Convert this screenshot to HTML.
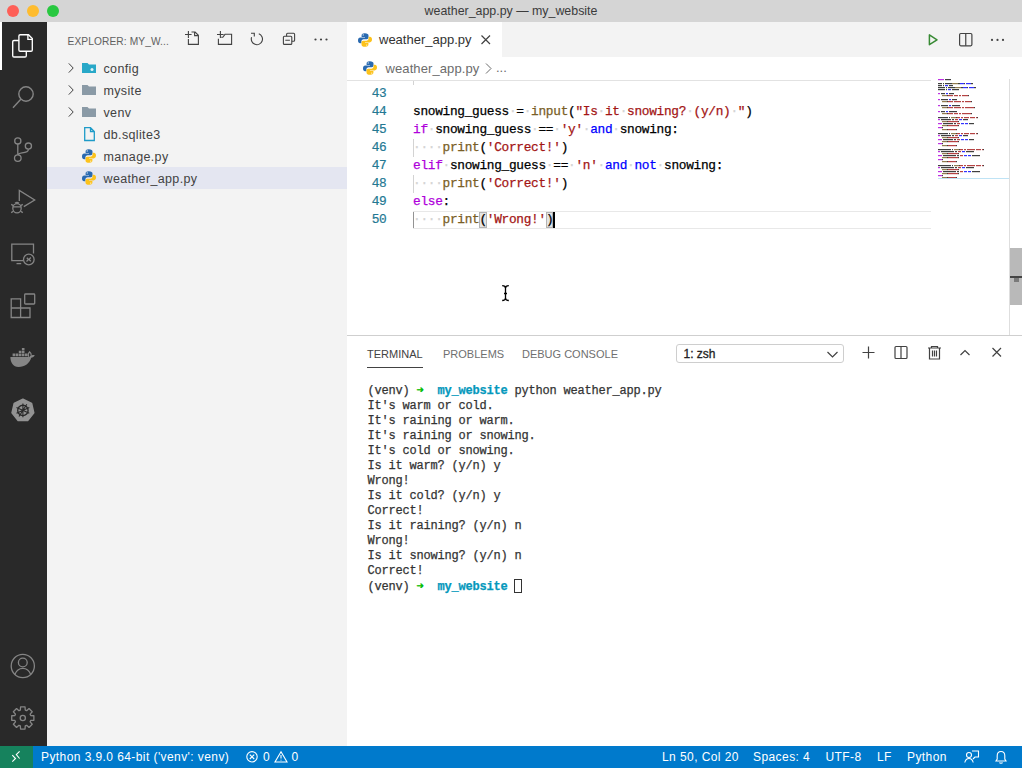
<!DOCTYPE html>
<html><head><meta charset="utf-8">
<style>
*{margin:0;padding:0;box-sizing:border-box}
html,body{width:1022px;height:768px;overflow:hidden;background:#fff;font-family:"Liberation Sans",sans-serif;-webkit-font-smoothing:antialiased}
.abs{position:absolute}
svg{position:absolute;overflow:visible}
#title{left:0;top:0;width:1022px;height:22px;background:#d5d5d5}
#title .t{position:absolute;left:0;width:1022px;top:4px;text-align:center;font-size:12.4px;color:#3b3b3b}
.tl{position:absolute;top:5px;width:12px;height:12px;border-radius:50%}
#act{left:0;top:22px;width:47px;height:724px;background:#292929}
#side{left:47px;top:22px;width:300px;height:724px;background:#f3f3f3}
#editor{left:347px;top:22px;width:675px;height:314px;background:#fff}
#panel{left:347px;top:336px;width:675px;height:410px;background:#fff}
#status{left:0;top:746px;width:1022px;height:22px;background:#007acc;color:#fff;font-size:12px}
.mono{font-family:"Liberation Mono",monospace}
.hdr{position:absolute;left:20.5px;top:14px;font-size:10.2px;color:#616161;letter-spacing:0.1px}
.row{position:absolute;left:0;width:300px;height:22px;font-size:12.5px;letter-spacing:0.35px;color:#424242}
.row .n{position:absolute;left:56.5px;top:4.6px}
.sel{background:#e4e6f1}
.ln{position:absolute;width:40px;text-align:right;color:#237893;-webkit-text-stroke:0.2px #237893}
.code{position:absolute;left:66px;white-space:pre;color:#000;font-size:12.8px;letter-spacing:-0.3px;-webkit-text-stroke:0.25px currentColor}
.kw{color:#af00db}.op{color:#0000ff}.fn{color:#795e26}.st{color:#a31515}
.ws{color:#d4d4d4}
.term{position:absolute;left:20.4px;top:48px;white-space:pre;font-size:12px;letter-spacing:-0.2px;line-height:15px;color:#333;-webkit-text-stroke:0.25px currentColor}
.cur{display:inline-block;width:7.4px;height:14px;border:1px solid #333;vertical-align:-3px}
.sb{position:absolute;top:4px;font-size:12px;letter-spacing:0.42px;color:#fff;white-space:pre}
</style></head><body>
<div id="title" class="abs">
  <div class="tl" style="left:7px;background:#fe5f57"></div>
  <div class="tl" style="left:27px;background:#febc2e"></div>
  <div class="tl" style="left:47px;background:#28c840"></div>
  <div class="t">weather_app.py — my_website</div>
</div>

<div id="act" class="abs">
  <div class="abs" style="left:0;top:0;width:1.5px;height:48px;background:#fff"></div>
  <!-- explorer -->
  <svg style="left:0;top:-22px" width="47" height="60" fill="none" stroke="#fff" stroke-width="1.35">
    <path d="M18.9 36 Q18.9 34.7 20.2 34.7 H28.5 L32.3 38.5 V49.9 Q32.3 51.2 31 51.2 H20.2 Q18.9 51.2 18.9 49.9 Z"/>
    <path d="M27.9 34.7 V39.4 H32.3"/>
    <path d="M18.9 40.5 H14 Q12.7 40.5 12.7 41.8 V55.7 Q12.7 57 14 57 H25 Q26.3 57 26.3 55.7 V51.2"/>
  </svg>
  <!-- search -->
  <svg style="left:0;top:-22px" width="47" height="120" fill="none" stroke="#858585" stroke-width="1.4">
    <circle cx="26" cy="94" r="7.2"/>
    <path d="M20.8 99.2 L13 107.8"/>
  </svg>
  <!-- scm -->
  <svg style="left:0;top:-22px" width="47" height="170" fill="none" stroke="#858585" stroke-width="1.3">
    <circle cx="17.8" cy="140.9" r="3.1"/>
    <circle cx="28.4" cy="146.1" r="3.1"/>
    <circle cx="17.8" cy="158.1" r="3.3"/>
    <path d="M17.8 144 V154.8 M28.4 149.2 C28.4 152 26 152.5 22 152.8 C20 153 18.5 153.8 17.8 154.8"/>
  </svg>
  <!-- debug -->
  <svg style="left:0;top:-22px" width="47" height="220" fill="none" stroke="#858585" stroke-width="1.3">
    <path d="M19.3 201 V190.4 L34.7 200 L23.8 206.6"/>
    <ellipse cx="17" cy="208.2" rx="4.2" ry="4.6"/>
    <path d="M12.8 206.8 H21.2 M11.2 204.4 L13.4 205.6 M22.8 204.4 L20.6 205.6 M11.2 212.6 L13.4 211.2 M22.8 212.6 L20.6 211.2 M15 203.2 Q17 201.8 19 203.2"/>
  </svg>
  <!-- remote -->
  <svg style="left:0;top:-22px" width="47" height="280" fill="none" stroke="#858585" stroke-width="1.3">
    <path d="M23 260.6 H11.8 V244.2 H33.5 V253.5"/>
    <path d="M16.5 263.6 H21.2"/>
    <circle cx="28.8" cy="259.5" r="5.3"/>
    <path d="M26.5 261.5 L28.5 259.5 L26.8 257.8 M30.8 257.5 L29 259.5 L30.8 261.3"/>
  </svg>
  <!-- extensions -->
  <svg style="left:0;top:-22px" width="47" height="330" fill="none" stroke="#858585" stroke-width="1.3">
    <path d="M11.2 298.8 H20.6 V317.5 H11.2 Z M11.2 308 H30 V317.5 H20.6"/>
    <rect x="24.7" y="294" width="10" height="10" rx="0.8"/>
  </svg>
  <!-- docker -->
  <svg style="left:0;top:-22px" width="47" height="380">
    <path fill="#858585" d="M10.4 357 H29.3 C30.2 355.3 32.4 354.4 34.8 355.3 C34 356.9 32.6 357.6 31.2 357.8 C29.6 363.2 25 367 18.5 367 C13.2 367 10.4 362.5 10.4 357 Z"/>
    <path fill="#858585" d="M12.6 353.6 H15.2 V356.3 H12.6 Z M15.7 353.6 H18.3 V356.3 H15.7 Z M18.8 353.6 H21.4 V356.3 H18.8 Z M21.9 353.6 H24.5 V356.3 H21.9 Z M25 353.6 H27.6 V356.3 H25 Z M18.8 350.7 H21.4 V353.1 H18.8 Z M21.9 350.7 H24.5 V353.1 H21.9 Z M21.9 347.9 H24.5 V350.2 H21.9 Z"/>
    <path fill="none" stroke="#858585" stroke-width="1.2" d="M28.6 356.8 C28 355 28.3 353 29.5 351.8 C30.8 352.8 31.4 354.2 31.2 355.6"/>
  </svg>
  <!-- k8s -->
  <svg style="left:0;top:-22px" width="47" height="430">
    <path fill="#939393" stroke="#939393" stroke-width="1.5" stroke-linejoin="round" d="M22.9 399.3 L31.6 403.5 L33.8 412.9 L27.7 420.5 L18.1 420.5 L12 412.9 L14.2 403.5 Z"/>
    <circle cx="22.9" cy="410.4" r="5.2" fill="none" stroke="#292929" stroke-width="1.4"/>
    <path d="M22.9 403.5 V417.3 M16.5 407.5 L29.3 413.3 M16.5 413.3 L29.3 407.5 M19 416.5 L26.8 404.3" stroke="#292929" stroke-width="1.1"/>
  </svg>
  <!-- account -->
  <svg style="left:0;top:-22px" width="47" height="700" fill="none" stroke="#858585" stroke-width="1.3">
    <circle cx="22.8" cy="666" r="11.6"/>
    <circle cx="22.8" cy="662.5" r="4.4"/>
    <path d="M14.8 674.5 C16.5 670 19.5 668.3 22.8 668.3 C26.1 668.3 29.1 670 30.8 674.5"/>
  </svg>
  <!-- settings -->
  <svg style="left:0;top:-22px" width="47" height="740" fill="none" stroke="#858585" stroke-width="1.3">
    <path stroke-linejoin="round" d="M20.35 710.07 L20.56 706.93 L25.04 706.93 L25.25 710.07 L26.67 710.66 L29.04 708.58 L32.22 711.76 L30.14 714.13 L30.73 715.55 L33.87 715.76 L33.87 720.24 L30.73 720.45 L30.14 721.87 L32.22 724.24 L29.04 727.42 L26.67 725.34 L25.25 725.93 L25.04 729.07 L20.56 729.07 L20.35 725.93 L18.93 725.34 L16.56 727.42 L13.38 724.24 L15.46 721.87 L14.87 720.45 L11.73 720.24 L11.73 715.76 L14.87 715.55 L15.46 714.13 L13.38 711.76 L16.56 708.58 L18.93 710.66 Z"/>
    <circle cx="22.8" cy="718" r="2.6"/>
  </svg>
</div>

<div id="side" class="abs">
  <div class="hdr">EXPLORER: MY_W...</div>
  <svg style="left:0;top:-22px" width="300" height="30" fill="none" stroke="#424242" stroke-width="1.1">
    <!-- new file -->
    <path d="M138 34.5 H144.6 M141.4 31 V37.9 M141.4 39 V44.4 H151.4 V35.3 L148.1 32 H144.5 M147.6 32 V35.6 H151.4"/>
    <!-- new folder -->
    <path d="M170 34.5 H176.6 M173.4 31 V37.9 M171.4 38.7 V44.4 H184.6 V34.3 H178 L175.8 37.3 H174.2"/>
    <!-- refresh -->
    <path d="M211.8 33.8 A5.6 5.6 0 1 1 204.6 37.2"/>
    <path d="M204 33.2 H207.3 V36.5"/>
    <!-- collapse -->
    <rect x="236.4" y="36.2" width="8.4" height="8.2" rx="1"/>
    <path d="M239.6 36.2 V34.2 Q239.6 33.2 240.6 33.2 H246.6 Q247.6 33.2 247.6 34.2 V40.2 Q247.6 41.2 246.6 41.2 H244.8 M238.3 40.3 H242.9"/>
  </svg>
  <svg style="left:0;top:-22px" width="300" height="50" fill="#424242">
    <circle cx="268.5" cy="39.5" r="1.1"/><circle cx="274" cy="39.5" r="1.1"/><circle cx="279.5" cy="39.5" r="1.1"/>
  </svg>

  <div class="row" style="top:35px">
    <svg style="left:20.5px;top:6px" width="8" height="12" fill="none" stroke="#424242" stroke-width="1"><path d="M0.8 0.4 L5.2 5 L0.8 9.6"/></svg>
    <svg style="left:35px;top:5px" width="16" height="12"><path fill="#28a8c8" d="M0 1 H5.5 L7 2.5 H14 V11 H0 Z"/><circle cx="10" cy="7.5" r="1.5" fill="#e0f4f8"/></svg>
    <div class="n">config</div>
  </div>
  <div class="row" style="top:57px">
    <svg style="left:20.5px;top:6px" width="8" height="12" fill="none" stroke="#424242" stroke-width="1"><path d="M0.8 0.4 L5.2 5 L0.8 9.6"/></svg>
    <svg style="left:35px;top:5px" width="16" height="12"><path fill="#8a9aa6" d="M0 1 H5.5 L7 2.5 H14 V11 H0 Z"/></svg>
    <div class="n">mysite</div>
  </div>
  <div class="row" style="top:79px">
    <svg style="left:20.5px;top:6px" width="8" height="12" fill="none" stroke="#424242" stroke-width="1"><path d="M0.8 0.4 L5.2 5 L0.8 9.6"/></svg>
    <svg style="left:35px;top:5px" width="16" height="12"><path fill="#8a9aa6" d="M0 1 H5.5 L7 2.5 H14 V11 H0 Z"/></svg>
    <div class="n">venv</div>
  </div>
  <div class="row" style="top:101px">
    <svg style="left:37px;top:4px" width="12" height="15" fill="none" stroke="#1e9bc8" stroke-width="1.3"><path d="M0.7 0.7 H6.5 L10.3 4.5 V13.5 H0.7 Z M6.5 0.7 V4.5 H10.3"/></svg>
    <div class="n">db.sqlite3</div>
  </div>
  <div class="row" style="top:123px">
    <svg class="py" style="left:35px;top:4px" width="14" height="14"><use href="#pyi"/></svg>
    <div class="n">manage.py</div>
  </div>
  <div class="row sel" style="top:145px">
    <svg class="py" style="left:35px;top:4px" width="14" height="14"><use href="#pyi"/></svg>
    <div class="n">weather_app.py</div>
  </div>
</div>

<svg width="0" height="0" style="position:absolute">
  <defs>
    <g id="pyi">
      <path fill="#2a6ab0" d="M6.8 0.3 C4 0.3 3.6 1.4 3.6 2.6 V4 H7 V4.6 H2.2 C1 4.6 0 5.6 0 7.4 C0 9.2 0.9 10.2 2.1 10.2 H3.4 V8.5 C3.4 7.3 4.4 6.3 5.6 6.3 H8.8 C9.8 6.3 10.5 5.5 10.5 4.6 V2.6 C10.5 1.2 9.3 0.3 6.8 0.3 Z"/>
      <circle cx="5.2" cy="1.9" r="0.6" fill="#fff"/>
      <path fill="#fcc21b" d="M7.2 13.7 C10 13.7 10.4 12.6 10.4 11.4 V10 H7 V9.4 H11.8 C13 9.4 14 8.4 14 6.6 C14 4.8 13.1 3.8 11.9 3.8 H10.6 V5.5 C10.6 6.7 9.6 7.7 8.4 7.7 H5.2 C4.2 7.7 3.5 8.5 3.5 9.4 V11.4 C3.5 12.8 4.7 13.7 7.2 13.7 Z"/>
      <circle cx="8.8" cy="12.1" r="0.6" fill="#fff"/>
    </g>
  </defs>
</svg>

<div id="editor" class="abs">
  <div class="abs" style="left:0;top:0;width:675px;height:35px;background:#f3f3f3"></div>
  <div class="abs" style="left:0;top:0;width:155px;height:35px;background:#fff">
    <svg style="left:11px;top:11px" width="14" height="14"><use href="#pyi"/></svg>
    <div class="abs" style="left:32px;top:10px;font-size:13px;color:#333">weather_app.py</div>
    <svg style="left:134px;top:13px" width="10" height="10" fill="none" stroke="#424242" stroke-width="1.2"><path d="M0.5 0.5 L9 9 M9 0.5 L0.5 9"/></svg>
  </div>
  <svg style="left:0;top:0" width="675" height="40">
    <path d="M582.4 12.9 V22.7 L590 17.8 Z" fill="none" stroke="#388a34" stroke-width="1.5" stroke-linejoin="round"/>
    <rect x="612.6" y="11.5" width="12.3" height="12.3" rx="1.2" fill="none" stroke="#424242" stroke-width="1.2"/>
    <path d="M618.75 11.5 V23.8" stroke="#424242" stroke-width="1.2"/>
    <circle cx="645" cy="17.9" r="1.1" fill="#424242"/><circle cx="650.5" cy="17.9" r="1.1" fill="#424242"/><circle cx="656" cy="17.9" r="1.1" fill="#424242"/>
  </svg>
  <!-- breadcrumbs -->
  <div class="abs" style="left:0;top:35px;width:675px;height:23px;background:#fff">
    <svg style="left:16px;top:3.5px" width="14" height="14"><use href="#pyi"/></svg>
    <div class="abs" style="left:38.5px;top:4px;font-size:13px;color:#6c6c6c;letter-spacing:0.1px">weather_app.py</div>
    <svg style="left:138px;top:6px" width="8" height="12" fill="none" stroke="#6c6c6c" stroke-width="1"><path d="M1 0.5 L6 5.5 L1 10.5"/></svg>
    <div class="abs" style="left:149px;top:3px;font-size:13px;color:#6c6c6c">...</div>
  </div>
  <!-- code -->
  <div id="code" class="abs mono" style="left:0;top:58px;width:675px;height:256px;overflow:hidden">
<div class="ln" style="left:0;top:-13px;height:18px;line-height:18px;font-size:12.8px;letter-spacing:-0.3px;width:39.5px">42</div>
<div class="abs" style="left:66px;top:-13px;width:1px;height:18px;background:#d3d3d3"></div><div class="abs" style="left:66px;top:59px;width:1px;height:18px;background:#d3d3d3"></div><div class="abs" style="left:66px;top:95px;width:1px;height:18px;background:#d3d3d3"></div><div class="abs" style="left:66px;top:131px;width:1px;height:18px;background:#939393"></div><div class="abs" style="left:132.4px;top:131.5px;width:7.4px;height:16.5px;background:#e4e4e4;border:1px solid #b4b4b4"></div><div class="abs" style="left:198.8px;top:131.5px;width:7.4px;height:16.5px;background:#e4e4e4;border:1px solid #b4b4b4"></div><div class="abs" style="left:206px;top:131px;width:2px;height:18px;background:#000"></div>
<div class="code" style="top:-15px;height:18px;line-height:18px"><span class="ws">····</span><span class="fn">print</span>(<span class="st">&#x27;Wrong!&#x27;</span>)</div>
<div class="ln" style="left:0;top:5px;height:18px;line-height:18px;font-size:12.8px;letter-spacing:-0.3px;width:39.5px">43</div>
<div class="code" style="top:5px;height:18px;line-height:18px"></div>
<div class="ln" style="left:0;top:23px;height:18px;line-height:18px;font-size:12.8px;letter-spacing:-0.3px;width:39.5px">44</div>
<div class="code" style="top:23px;height:18px;line-height:18px">snowing_guess<span class="ws">·</span>=<span class="ws">·</span><span class="fn">input</span>(<span class="st">&quot;Is</span><span class="ws">·</span><span class="st">it</span><span class="ws">·</span><span class="st">snowing?</span><span class="ws">·</span><span class="st">(y/n)</span><span class="ws">·</span><span class="st">&quot;</span>)</div>
<div class="ln" style="left:0;top:41px;height:18px;line-height:18px;font-size:12.8px;letter-spacing:-0.3px;width:39.5px">45</div>
<div class="code" style="top:41px;height:18px;line-height:18px"><span class="kw">if</span><span class="ws">·</span>snowing_guess<span class="ws">·</span>==<span class="ws">·</span><span class="st">&#x27;y&#x27;</span><span class="ws">·</span><span class="op">and</span><span class="ws">·</span>snowing:</div>
<div class="ln" style="left:0;top:59px;height:18px;line-height:18px;font-size:12.8px;letter-spacing:-0.3px;width:39.5px">46</div>
<div class="code" style="top:59px;height:18px;line-height:18px"><span class="ws">····</span><span class="fn">print</span>(<span class="st">&#x27;Correct!&#x27;</span>)</div>
<div class="ln" style="left:0;top:77px;height:18px;line-height:18px;font-size:12.8px;letter-spacing:-0.3px;width:39.5px">47</div>
<div class="code" style="top:77px;height:18px;line-height:18px"><span class="kw">elif</span><span class="ws">·</span>snowing_guess<span class="ws">·</span>==<span class="ws">·</span><span class="st">&#x27;n&#x27;</span><span class="ws">·</span><span class="op">and</span><span class="ws">·</span><span class="op">not</span><span class="ws">·</span>snowing:</div>
<div class="ln" style="left:0;top:95px;height:18px;line-height:18px;font-size:12.8px;letter-spacing:-0.3px;width:39.5px">48</div>
<div class="code" style="top:95px;height:18px;line-height:18px"><span class="ws">····</span><span class="fn">print</span>(<span class="st">&#x27;Correct!&#x27;</span>)</div>
<div class="ln" style="left:0;top:113px;height:18px;line-height:18px;font-size:12.8px;letter-spacing:-0.3px;width:39.5px">49</div>
<div class="code" style="top:113px;height:18px;line-height:18px"><span class="kw">else</span>:</div>
<div class="ln" style="left:0;top:131px;height:18px;line-height:18px;font-size:12.8px;letter-spacing:-0.3px;width:39.5px">50</div>
<div class="code" style="top:131px;height:18px;line-height:18px"><span class="ws">····</span><span class="fn">print</span><span class="br">(</span><span class="st">&#x27;Wrong!&#x27;</span><span class="br2">)</span></div>
  </div>
<div id="minimap" class="abs" style="left:-347px;top:-22px;width:1022px;height:340px;pointer-events:none">
<svg style="left:0;top:0" width="1022" height="340" opacity="0.8"><rect x="938" y="79" width="6" height="1.2" fill="#af00db"/><rect x="945" y="79" width="6" height="1.2" fill="#111"/><rect x="938" y="83" width="4" height="1.2" fill="#111"/><rect x="943" y="83" width="1" height="1.2" fill="#111"/><rect x="945" y="83" width="6" height="1.2" fill="#111"/><rect x="951" y="83" width="1" height="1.2" fill="#111"/><rect x="952" y="83" width="6" height="1.2" fill="#795e26"/><rect x="958" y="83" width="1" height="1.2" fill="#111"/><rect x="959" y="83" width="1" height="1.2" fill="#111"/><rect x="960" y="83" width="4" height="1.2" fill="#0000ff"/><rect x="964" y="83" width="1" height="1.2" fill="#111"/><rect x="966" y="83" width="5" height="1.2" fill="#0000ff"/><rect x="971" y="83" width="1" height="1.2" fill="#111"/><rect x="972" y="83" width="1" height="1.2" fill="#111"/><rect x="938" y="85" width="4" height="1.2" fill="#111"/><rect x="943" y="85" width="1" height="1.2" fill="#111"/><rect x="945" y="85" width="3" height="1.2" fill="#0000ff"/><rect x="949" y="85" width="4" height="1.2" fill="#111"/><rect x="938" y="87" width="7" height="1.2" fill="#111"/><rect x="946" y="87" width="1" height="1.2" fill="#111"/><rect x="948" y="87" width="6" height="1.2" fill="#111"/><rect x="954" y="87" width="1" height="1.2" fill="#111"/><rect x="955" y="87" width="6" height="1.2" fill="#795e26"/><rect x="961" y="87" width="1" height="1.2" fill="#111"/><rect x="962" y="87" width="1" height="1.2" fill="#111"/><rect x="963" y="87" width="4" height="1.2" fill="#0000ff"/><rect x="967" y="87" width="1" height="1.2" fill="#111"/><rect x="969" y="87" width="5" height="1.2" fill="#0000ff"/><rect x="974" y="87" width="1" height="1.2" fill="#111"/><rect x="975" y="87" width="1" height="1.2" fill="#111"/><rect x="938" y="89" width="7" height="1.2" fill="#111"/><rect x="946" y="89" width="1" height="1.2" fill="#111"/><rect x="948" y="89" width="3" height="1.2" fill="#0000ff"/><rect x="952" y="89" width="7" height="1.2" fill="#111"/><rect x="938" y="93" width="2" height="1.2" fill="#af00db"/><rect x="941" y="93" width="4" height="1.2" fill="#111"/><rect x="946" y="93" width="2" height="1.2" fill="#0000ff"/><rect x="949" y="93" width="4" height="1.2" fill="#111"/><rect x="953" y="93" width="1" height="1.2" fill="#111"/><rect x="942" y="95" width="5" height="1.2" fill="#795e26"/><rect x="947" y="95" width="1" height="1.2" fill="#111"/><rect x="948" y="95" width="5" height="1.2" fill="#a31515"/><rect x="954" y="95" width="4" height="1.2" fill="#a31515"/><rect x="959" y="95" width="2" height="1.2" fill="#a31515"/><rect x="962" y="95" width="6" height="1.2" fill="#a31515"/><rect x="968" y="95" width="1" height="1.2" fill="#111"/><rect x="938" y="99" width="2" height="1.2" fill="#af00db"/><rect x="941" y="99" width="7" height="1.2" fill="#111"/><rect x="949" y="99" width="2" height="1.2" fill="#0000ff"/><rect x="952" y="99" width="4" height="1.2" fill="#111"/><rect x="956" y="99" width="1" height="1.2" fill="#111"/><rect x="942" y="101" width="5" height="1.2" fill="#795e26"/><rect x="947" y="101" width="1" height="1.2" fill="#111"/><rect x="948" y="101" width="5" height="1.2" fill="#a31515"/><rect x="954" y="101" width="7" height="1.2" fill="#a31515"/><rect x="962" y="101" width="2" height="1.2" fill="#a31515"/><rect x="965" y="101" width="6" height="1.2" fill="#a31515"/><rect x="971" y="101" width="1" height="1.2" fill="#111"/><rect x="938" y="105" width="2" height="1.2" fill="#af00db"/><rect x="941" y="105" width="7" height="1.2" fill="#111"/><rect x="949" y="105" width="2" height="1.2" fill="#0000ff"/><rect x="952" y="105" width="7" height="1.2" fill="#111"/><rect x="959" y="105" width="1" height="1.2" fill="#111"/><rect x="942" y="107" width="5" height="1.2" fill="#795e26"/><rect x="947" y="107" width="1" height="1.2" fill="#111"/><rect x="948" y="107" width="5" height="1.2" fill="#a31515"/><rect x="954" y="107" width="7" height="1.2" fill="#a31515"/><rect x="962" y="107" width="2" height="1.2" fill="#a31515"/><rect x="965" y="107" width="9" height="1.2" fill="#a31515"/><rect x="974" y="107" width="1" height="1.2" fill="#111"/><rect x="938" y="111" width="2" height="1.2" fill="#af00db"/><rect x="941" y="111" width="4" height="1.2" fill="#111"/><rect x="946" y="111" width="2" height="1.2" fill="#0000ff"/><rect x="949" y="111" width="7" height="1.2" fill="#111"/><rect x="956" y="111" width="1" height="1.2" fill="#111"/><rect x="942" y="113" width="5" height="1.2" fill="#795e26"/><rect x="947" y="113" width="1" height="1.2" fill="#111"/><rect x="948" y="113" width="5" height="1.2" fill="#a31515"/><rect x="954" y="113" width="4" height="1.2" fill="#a31515"/><rect x="959" y="113" width="2" height="1.2" fill="#a31515"/><rect x="962" y="113" width="9" height="1.2" fill="#a31515"/><rect x="971" y="113" width="1" height="1.2" fill="#111"/><rect x="938" y="117" width="10" height="1.2" fill="#111"/><rect x="949" y="117" width="1" height="1.2" fill="#111"/><rect x="951" y="117" width="5" height="1.2" fill="#795e26"/><rect x="956" y="117" width="1" height="1.2" fill="#111"/><rect x="957" y="117" width="3" height="1.2" fill="#a31515"/><rect x="961" y="117" width="2" height="1.2" fill="#a31515"/><rect x="964" y="117" width="5" height="1.2" fill="#a31515"/><rect x="970" y="117" width="5" height="1.2" fill="#a31515"/><rect x="976" y="117" width="1" height="1.2" fill="#a31515"/><rect x="977" y="117" width="1" height="1.2" fill="#111"/><rect x="938" y="119" width="2" height="1.2" fill="#af00db"/><rect x="941" y="119" width="10" height="1.2" fill="#111"/><rect x="952" y="119" width="1" height="1.2" fill="#111"/><rect x="953" y="119" width="1" height="1.2" fill="#111"/><rect x="955" y="119" width="3" height="1.2" fill="#a31515"/><rect x="959" y="119" width="3" height="1.2" fill="#0000ff"/><rect x="963" y="119" width="4" height="1.2" fill="#111"/><rect x="967" y="119" width="1" height="1.2" fill="#111"/><rect x="942" y="121" width="5" height="1.2" fill="#795e26"/><rect x="947" y="121" width="1" height="1.2" fill="#111"/><rect x="948" y="121" width="10" height="1.2" fill="#a31515"/><rect x="958" y="121" width="1" height="1.2" fill="#111"/><rect x="938" y="123" width="4" height="1.2" fill="#af00db"/><rect x="943" y="123" width="10" height="1.2" fill="#111"/><rect x="954" y="123" width="1" height="1.2" fill="#111"/><rect x="955" y="123" width="1" height="1.2" fill="#111"/><rect x="957" y="123" width="3" height="1.2" fill="#a31515"/><rect x="961" y="123" width="3" height="1.2" fill="#0000ff"/><rect x="965" y="123" width="3" height="1.2" fill="#0000ff"/><rect x="969" y="123" width="4" height="1.2" fill="#111"/><rect x="973" y="123" width="1" height="1.2" fill="#111"/><rect x="942" y="125" width="5" height="1.2" fill="#795e26"/><rect x="947" y="125" width="1" height="1.2" fill="#111"/><rect x="948" y="125" width="10" height="1.2" fill="#a31515"/><rect x="958" y="125" width="1" height="1.2" fill="#111"/><rect x="938" y="127" width="4" height="1.2" fill="#af00db"/><rect x="942" y="127" width="1" height="1.2" fill="#111"/><rect x="942" y="129" width="5" height="1.2" fill="#795e26"/><rect x="947" y="129" width="1" height="1.2" fill="#111"/><rect x="948" y="129" width="8" height="1.2" fill="#a31515"/><rect x="956" y="129" width="1" height="1.2" fill="#111"/><rect x="938" y="133" width="10" height="1.2" fill="#111"/><rect x="949" y="133" width="1" height="1.2" fill="#111"/><rect x="951" y="133" width="5" height="1.2" fill="#795e26"/><rect x="956" y="133" width="1" height="1.2" fill="#111"/><rect x="957" y="133" width="3" height="1.2" fill="#a31515"/><rect x="961" y="133" width="2" height="1.2" fill="#a31515"/><rect x="964" y="133" width="5" height="1.2" fill="#a31515"/><rect x="970" y="133" width="5" height="1.2" fill="#a31515"/><rect x="976" y="133" width="1" height="1.2" fill="#a31515"/><rect x="977" y="133" width="1" height="1.2" fill="#111"/><rect x="938" y="135" width="2" height="1.2" fill="#af00db"/><rect x="941" y="135" width="10" height="1.2" fill="#111"/><rect x="952" y="135" width="1" height="1.2" fill="#111"/><rect x="953" y="135" width="1" height="1.2" fill="#111"/><rect x="955" y="135" width="3" height="1.2" fill="#a31515"/><rect x="959" y="135" width="3" height="1.2" fill="#0000ff"/><rect x="963" y="135" width="4" height="1.2" fill="#111"/><rect x="967" y="135" width="1" height="1.2" fill="#111"/><rect x="942" y="137" width="5" height="1.2" fill="#795e26"/><rect x="947" y="137" width="1" height="1.2" fill="#111"/><rect x="948" y="137" width="10" height="1.2" fill="#a31515"/><rect x="958" y="137" width="1" height="1.2" fill="#111"/><rect x="938" y="139" width="4" height="1.2" fill="#af00db"/><rect x="943" y="139" width="10" height="1.2" fill="#111"/><rect x="954" y="139" width="1" height="1.2" fill="#111"/><rect x="955" y="139" width="1" height="1.2" fill="#111"/><rect x="957" y="139" width="3" height="1.2" fill="#a31515"/><rect x="961" y="139" width="3" height="1.2" fill="#0000ff"/><rect x="965" y="139" width="3" height="1.2" fill="#0000ff"/><rect x="969" y="139" width="4" height="1.2" fill="#111"/><rect x="973" y="139" width="1" height="1.2" fill="#111"/><rect x="942" y="141" width="5" height="1.2" fill="#795e26"/><rect x="947" y="141" width="1" height="1.2" fill="#111"/><rect x="948" y="141" width="10" height="1.2" fill="#a31515"/><rect x="958" y="141" width="1" height="1.2" fill="#111"/><rect x="938" y="143" width="4" height="1.2" fill="#af00db"/><rect x="942" y="143" width="1" height="1.2" fill="#111"/><rect x="942" y="145" width="5" height="1.2" fill="#795e26"/><rect x="947" y="145" width="1" height="1.2" fill="#111"/><rect x="948" y="145" width="8" height="1.2" fill="#a31515"/><rect x="956" y="145" width="1" height="1.2" fill="#111"/><rect x="938" y="149" width="13" height="1.2" fill="#111"/><rect x="952" y="149" width="1" height="1.2" fill="#111"/><rect x="954" y="149" width="5" height="1.2" fill="#795e26"/><rect x="959" y="149" width="1" height="1.2" fill="#111"/><rect x="960" y="149" width="3" height="1.2" fill="#a31515"/><rect x="964" y="149" width="2" height="1.2" fill="#a31515"/><rect x="967" y="149" width="8" height="1.2" fill="#a31515"/><rect x="976" y="149" width="5" height="1.2" fill="#a31515"/><rect x="982" y="149" width="1" height="1.2" fill="#a31515"/><rect x="983" y="149" width="1" height="1.2" fill="#111"/><rect x="938" y="151" width="2" height="1.2" fill="#af00db"/><rect x="941" y="151" width="13" height="1.2" fill="#111"/><rect x="955" y="151" width="1" height="1.2" fill="#111"/><rect x="956" y="151" width="1" height="1.2" fill="#111"/><rect x="958" y="151" width="3" height="1.2" fill="#a31515"/><rect x="962" y="151" width="3" height="1.2" fill="#0000ff"/><rect x="966" y="151" width="7" height="1.2" fill="#111"/><rect x="973" y="151" width="1" height="1.2" fill="#111"/><rect x="942" y="153" width="5" height="1.2" fill="#795e26"/><rect x="947" y="153" width="1" height="1.2" fill="#111"/><rect x="948" y="153" width="10" height="1.2" fill="#a31515"/><rect x="958" y="153" width="1" height="1.2" fill="#111"/><rect x="938" y="155" width="4" height="1.2" fill="#af00db"/><rect x="943" y="155" width="13" height="1.2" fill="#111"/><rect x="957" y="155" width="1" height="1.2" fill="#111"/><rect x="958" y="155" width="1" height="1.2" fill="#111"/><rect x="960" y="155" width="3" height="1.2" fill="#a31515"/><rect x="964" y="155" width="3" height="1.2" fill="#0000ff"/><rect x="968" y="155" width="3" height="1.2" fill="#0000ff"/><rect x="972" y="155" width="7" height="1.2" fill="#111"/><rect x="979" y="155" width="1" height="1.2" fill="#111"/><rect x="942" y="157" width="5" height="1.2" fill="#795e26"/><rect x="947" y="157" width="1" height="1.2" fill="#111"/><rect x="948" y="157" width="10" height="1.2" fill="#a31515"/><rect x="958" y="157" width="1" height="1.2" fill="#111"/><rect x="938" y="159" width="4" height="1.2" fill="#af00db"/><rect x="942" y="159" width="1" height="1.2" fill="#111"/><rect x="942" y="161" width="5" height="1.2" fill="#795e26"/><rect x="947" y="161" width="1" height="1.2" fill="#111"/><rect x="948" y="161" width="8" height="1.2" fill="#a31515"/><rect x="956" y="161" width="1" height="1.2" fill="#111"/><rect x="938" y="165" width="13" height="1.2" fill="#111"/><rect x="952" y="165" width="1" height="1.2" fill="#111"/><rect x="954" y="165" width="5" height="1.2" fill="#795e26"/><rect x="959" y="165" width="1" height="1.2" fill="#111"/><rect x="960" y="165" width="3" height="1.2" fill="#a31515"/><rect x="964" y="165" width="2" height="1.2" fill="#a31515"/><rect x="967" y="165" width="8" height="1.2" fill="#a31515"/><rect x="976" y="165" width="5" height="1.2" fill="#a31515"/><rect x="982" y="165" width="1" height="1.2" fill="#a31515"/><rect x="983" y="165" width="1" height="1.2" fill="#111"/><rect x="938" y="167" width="2" height="1.2" fill="#af00db"/><rect x="941" y="167" width="13" height="1.2" fill="#111"/><rect x="955" y="167" width="1" height="1.2" fill="#111"/><rect x="956" y="167" width="1" height="1.2" fill="#111"/><rect x="958" y="167" width="3" height="1.2" fill="#a31515"/><rect x="962" y="167" width="3" height="1.2" fill="#0000ff"/><rect x="966" y="167" width="7" height="1.2" fill="#111"/><rect x="973" y="167" width="1" height="1.2" fill="#111"/><rect x="942" y="169" width="5" height="1.2" fill="#795e26"/><rect x="947" y="169" width="1" height="1.2" fill="#111"/><rect x="948" y="169" width="10" height="1.2" fill="#a31515"/><rect x="958" y="169" width="1" height="1.2" fill="#111"/><rect x="938" y="171" width="4" height="1.2" fill="#af00db"/><rect x="943" y="171" width="13" height="1.2" fill="#111"/><rect x="957" y="171" width="1" height="1.2" fill="#111"/><rect x="958" y="171" width="1" height="1.2" fill="#111"/><rect x="960" y="171" width="3" height="1.2" fill="#a31515"/><rect x="964" y="171" width="3" height="1.2" fill="#0000ff"/><rect x="968" y="171" width="3" height="1.2" fill="#0000ff"/><rect x="972" y="171" width="7" height="1.2" fill="#111"/><rect x="979" y="171" width="1" height="1.2" fill="#111"/><rect x="942" y="173" width="5" height="1.2" fill="#795e26"/><rect x="947" y="173" width="1" height="1.2" fill="#111"/><rect x="948" y="173" width="10" height="1.2" fill="#a31515"/><rect x="958" y="173" width="1" height="1.2" fill="#111"/><rect x="938" y="175" width="4" height="1.2" fill="#af00db"/><rect x="942" y="175" width="1" height="1.2" fill="#111"/><rect x="942" y="177" width="5" height="1.2" fill="#795e26"/><rect x="947" y="177" width="1" height="1.2" fill="#111"/><rect x="948" y="177" width="8" height="1.2" fill="#a31515"/><rect x="956" y="177" width="1" height="1.2" fill="#111"/></svg>
<div class="abs" style="left:938px;top:177.5px;width:71px;height:1.5px;background:#bfe3f5"></div>
<div class="abs" style="left:1009px;top:79px;width:1px;height:257px;background:#dedede"></div>
<div class="abs" style="left:1009.5px;top:248px;width:12.5px;height:57px;background:#b9b9b9"></div><div class="abs" style="left:1014px;top:278px;width:5px;height:4px;background:#7a7a7a"></div>
<div class="abs" style="left:1010px;top:276px;width:12px;height:2px;background:#444"></div>
<div class="abs" style="left:347px;top:80px;width:584px;height:1px;background:#e2e2e2"></div>
<div class="abs" style="left:413px;top:211px;width:518px;height:17.5px;border-top:1.5px solid #e8e8e8;border-bottom:1.5px solid #e8e8e8"></div>
</div>
</div>

<div id="panel" class="abs">
  <div class="abs" style="left:0;top:-1px;width:675px;height:1px;background:#cfcfcf"></div>
  <div class="abs" style="left:20px;top:12px;font-size:11px;color:#424242">TERMINAL</div>
  <div class="abs" style="left:20px;top:31px;width:56px;height:1px;background:#424242"></div>
  <div class="abs" style="left:96px;top:12px;font-size:11px;color:#6f6f6f">PROBLEMS</div>
  <div class="abs" style="left:175px;top:12px;font-size:11px;color:#6f6f6f">DEBUG CONSOLE</div>
  <div class="abs" style="left:329px;top:8px;width:168px;height:19px;border:1px solid #cecece;border-radius:3px;background:#fff">
    <div class="abs" style="left:6.5px;top:2px;font-size:12px;color:#222;-webkit-text-stroke:0.3px #222">1: zsh</div>
    <svg style="left:150px;top:6px" width="12" height="8" fill="none" stroke="#424242" stroke-width="1.2"><path d="M0.5 1 L5.5 6 L10.5 1"/></svg>
  </div>
  <svg style="left:0;top:0" width="675" height="40" fill="none" stroke="#424242" stroke-width="1.2">
    <path d="M521.5 10.5 V22.5 M515.5 16.5 H527.5"/>
    <rect x="548" y="10.5" width="12" height="12" rx="1"/><path d="M554 10.5 V22.5"/>
    <path d="M581 12 H594 M584.5 12 V10.5 H590.5 V12 M582.5 12 V23 H592.5 V12 M585.5 14.5 V20.5 M587.5 14.5 V20.5 M589.5 14.5 V20.5"/>
    <path d="M613.5 19 L618 14.5 L622.5 19"/>
    <path d="M645.5 12 L654 20.5 M654 12 L645.5 20.5"/>
  </svg>
  <div class="term mono" id="term">(venv) <b style="color:#00bc00">➜</b>  <b style="color:#0598bc">my_website</b> python weather_app.py
It's warm or cold.
It's raining or warm.
It's raining or snowing.
It's cold or snowing.
Is it warm? (y/n) y
Wrong!
Is it cold? (y/n) y
Correct!
Is it raining? (y/n) n
Wrong!
Is it snowing? (y/n) n
Correct!
(venv) <b style="color:#00bc00">➜</b>  <b style="color:#0598bc">my_website</b> <span class="cur"></span></div>
</div>

<div id="status" class="abs">
  <div class="abs" style="left:0;top:0;width:33px;height:22px;background:#16825d"></div>
  <svg style="left:0;top:0" width="33" height="22" fill="none" stroke="#fff" stroke-width="1.1"><path d="M12.3 9.2 L15.5 12.5 L12.3 15.6 M19.6 5.3 L16.3 8.6 L19.6 12.5"/></svg>
  <div class="sb" style="left:41px">Python 3.9.0 64-bit ('venv': venv)</div>
  <svg style="left:246px;top:5px" width="60" height="14" fill="none" stroke="#fff" stroke-width="1.1">
    <circle cx="6" cy="5.8" r="5.2"/><path d="M3.8 3.6 L8.2 8 M8.2 3.6 L3.8 8"/>
    <path d="M35 0.8 L41 11 H29 Z M35 4 V7.5 M35 8.8 V9.6"/>
  </svg>
  <div class="sb" style="left:263px">0</div>
  <div class="sb" style="left:291.5px">0</div>
  <div class="sb" style="left:662px">Ln 50, Col 20</div>
  <div class="sb" style="left:753px">Spaces: 4</div>
  <div class="sb" style="left:825.5px">UTF-8</div>
  <div class="sb" style="left:877px">LF</div>
  <div class="sb" style="left:907px">Python</div>
  <svg style="left:964px;top:4px" width="16" height="15" fill="none" stroke="#fff" stroke-width="1.1">
    <circle cx="5" cy="5" r="2.5"/><path d="M0.8 12.5 C1.5 9.5 3 8.5 5 8.5 C7 8.5 8.5 9.5 9.2 12.5 M8 1 H14.5 V7 H11 L9 9"/>
  </svg>
  <svg style="left:994px;top:4px" width="14" height="15" fill="none" stroke="#fff" stroke-width="1.1">
    <path d="M2 11 H12 L10.8 9 V5.8 C10.8 3.3 9.2 1.5 7 1.5 C4.8 1.5 3.2 3.3 3.2 5.8 V9 Z M5.5 12.5 C5.8 13.5 8.2 13.5 8.5 12.5"/>
  </svg>
</div>
<svg style="left:0;top:0" width="1022" height="768" fill="none" stroke="#fff" stroke-width="2.6" stroke-linecap="round">
<path d="M502.2 285.6 Q505.5 285.6 505.5 288.2 V298 Q505.5 300.5 502.2 300.5 M508.8 285.6 Q505.5 285.6 505.5 288.2 M508.8 300.5 Q505.5 300.5 505.5 298 M504 293.5 H507"/>
<path stroke="#000" stroke-width="1.3" stroke-linecap="butt" d="M502.2 285.6 Q505.5 285.6 505.5 288.2 V298 Q505.5 300.5 502.2 300.5 M508.8 285.6 Q505.5 285.6 505.5 288.2 M508.8 300.5 Q505.5 300.5 505.5 298 M504 293.5 H507"/>
</svg>
</body></html>
